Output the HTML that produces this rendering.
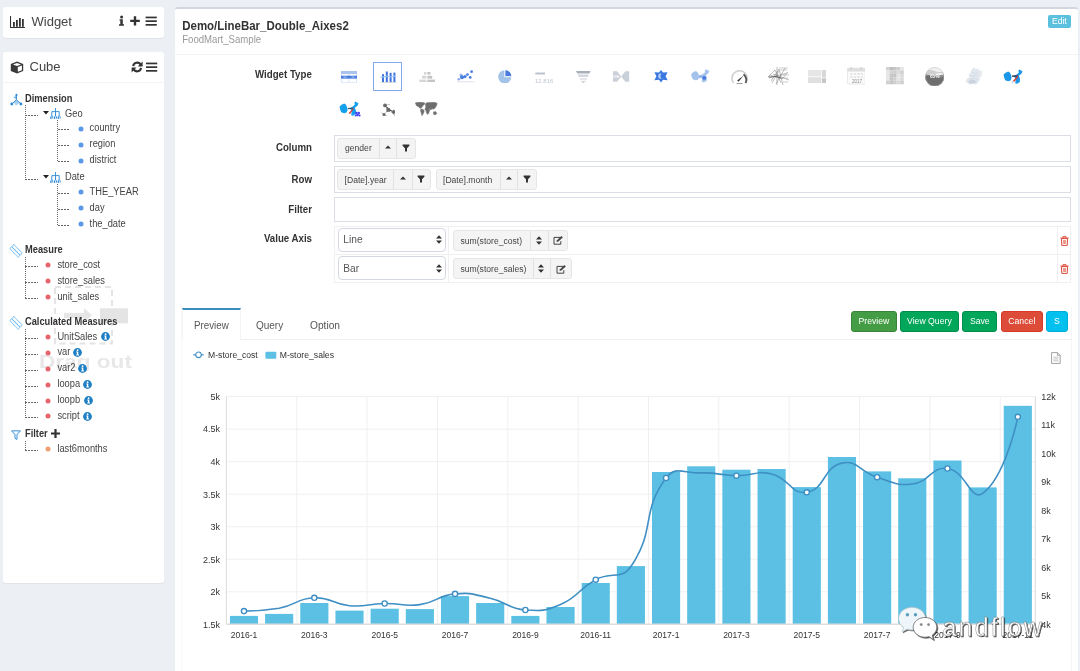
<!DOCTYPE html>
<html><head><meta charset="utf-8">
<style>
*{box-sizing:border-box}
html,body{margin:0;padding:0}
body{-webkit-font-smoothing:antialiased;will-change:transform;width:1080px;height:671px;background:#ecf0f5;position:relative;overflow:hidden;font-family:"Liberation Sans",sans-serif;color:#333}
.a{position:absolute}
.box{position:absolute;background:#fff;border-radius:3px;box-shadow:0 1px 1px rgba(0,0,0,0.06)}
.t{position:absolute;white-space:nowrap;line-height:1}
.tree{font-size:10px;color:#444}
.dl{position:absolute;width:1px;background:repeating-linear-gradient(to bottom,#666 0,#666 1px,transparent 1px,transparent 2px)}
.dh{position:absolute;height:1px;background:repeating-linear-gradient(to right,#666 0,#666 2px,transparent 2px,transparent 3px)}
.dot{position:absolute;width:4.6px;height:4.6px;border-radius:50%}
.blue{background:#5d9ae6;box-shadow:0 0 0.6px 0.4px #9cc0f0}
.red{background:#e86a72;box-shadow:0 0 0.6px 0.4px #f0a8a8}
.org{background:#f0a070}
.info{position:absolute;width:8px;height:8px;border-radius:50%;background:#1b7fc4;color:#fff;font-size:7px;font-weight:bold;text-align:center;line-height:8px;font-family:"Liberation Serif",serif}
.lbl{position:absolute;font-weight:bold;font-size:10px;color:#333;text-align:right;white-space:nowrap;line-height:1}
.fbox{position:absolute;border:1px solid #d2d6de;background:#fff}
.pill{position:absolute;background:#f4f4f4;border:1px solid #e3e3e3;border-radius:3px;height:21px;font-size:9px;color:#444}
.pill span{position:absolute;top:0;height:19px;line-height:19px;white-space:nowrap}
.pill .sep{position:absolute;top:0;width:1px;height:19px;background:#e0e0e0}
.btn{position:absolute;color:#fff;font-size:10px;text-align:center;border-radius:3px;line-height:21px;height:21.5px}
</style></head><body>
<!-- Widget box -->
<div class="box" style="left:3px;top:7px;width:161px;height:31px"></div>
<svg class="a" style="left:10px;top:16px" width="16" height="12" viewBox="0 0 16 12">
 <path d="M0.5 0 V11.5 H15" fill="none" stroke="#333" stroke-width="1.1"/>
 <rect x="3" y="6" width="1.8" height="4.8" fill="#333"/>
 <rect x="6" y="4" width="1.8" height="6.8" fill="#333"/>
 <rect x="9" y="2" width="1.8" height="8.8" fill="#333"/>
 <rect x="12" y="3" width="1.8" height="7.8" fill="#333"/>
</svg>
<div class="t" style="left:31.5px;top:15px;font-size:13px;color:#444">Widget</div>
<svg class="a" style="left:118px;top:15px" width="42" height="12" viewBox="0 0 42 12">
 <g fill="#333">
 <circle cx="3.6" cy="2" r="1.5"/>
 <path d="M1.5 4.2 H4.8 V9.3 H6 V10.8 H1 V9.3 H2.3 V5.6 H1.5Z"/>
 <path d="M12.2 4.7 H15.8 V1.2 H18.2 V4.7 H21.8 V7.1 H18.2 V10.6 H15.8 V7.1 H12.2Z"/>
 <rect x="27.6" y="1.6" width="11.2" height="1.7"/>
 <rect x="27.6" y="5.3" width="11.2" height="1.7"/>
 <rect x="27.6" y="9" width="11.2" height="1.7"/>
 </g>
</svg>
<!-- Cube box -->
<div class="box" style="left:3px;top:52px;width:161px;height:531px"></div>
<div class="a" style="left:3px;top:82px;width:161px;height:1px;background:#f4f4f4"></div>
<svg class="a" style="left:9.5px;top:60.5px" width="14" height="13" viewBox="0 0 14 13">
 <path d="M7 0.6 L13.2 2.9 V9.9 L7 12.4 L0.8 9.9 V2.9Z" fill="#3a3a3a"/>
 <path d="M7 2 L11 3.4 L7 4.9 L3 3.4Z" fill="#fff"/>
 <path d="M7.8 6 L11.9 4.5 V9.2 L7.8 10.8Z" fill="#fff"/>
</svg>
<div class="t" style="left:29.5px;top:60px;font-size:13px;color:#444">Cube</div>
<svg class="a" style="left:131px;top:60.5px" width="28" height="12" viewBox="0 0 28 12">
 <g fill="none" stroke="#333" stroke-width="2.1">
  <path d="M2.2 5.2 A4 4 0 0 1 9.6 3.6"/>
  <path d="M10 6.8 A4 4 0 0 1 2.6 8.4"/>
 </g>
 <g fill="#333">
  <path d="M11.6 0.6 V5.6 H6.8Z"/>
  <path d="M0.6 11.4 V6.4 H5.4Z"/>
  <rect x="15" y="1.6" width="11.2" height="1.7"/>
  <rect x="15" y="5.3" width="11.2" height="1.7"/>
  <rect x="15" y="9" width="11.2" height="1.7"/>
 </g>
</svg>
<svg class="a" style="left:0;top:0" width="170" height="400"><g fill="none" stroke="#e4e4e4" stroke-width="2" stroke-dasharray="6 4"><rect x="55" y="287" width="57" height="56.5"/></g><path d="M64 313H84V308L92 315.2L84 322.5V318H64Z" fill="#e6e6e6"/><rect x="100" y="308.3" width="28" height="15" fill="#e4e4e4"/><text transform="translate(39 367.9) scale(1.19 1)" font-family="Liberation Sans, sans-serif" font-weight="bold" font-size="19" fill="#e8e8e8">Drag out</text></svg>
<svg class="a" style="left:6px;top:90px" width="24" height="20" viewBox="0 0 24 20"><path d="M10.4 9.8 L13.6 12.6 L10.4 15.4 L7.2 12.6Z" fill="#a9d3f3"/><path d="M10.4 9.6 L7.4 7 L10.4 6Z" fill="#6fb6ee"/><path d="M10.4 4.6V9.8 M10.4 9.8 L6 13.8 M10.4 9.8 L14.8 13.8" fill="none" stroke="#2f7fc8" stroke-width="0.9"/><path d="M10.4 3.6 L12 5.6 H8.8Z" fill="#2f86d0"/><circle cx="5.8" cy="14" r="1.4" fill="#2a88d8"/><circle cx="14.9" cy="14" r="1.4" fill="#2a88d8"/></svg>
<div class="dl" style="left:24.5px;top:105px;height:74.5px"></div>
<div class="dh" style="left:25px;top:115px;width:13px"></div>
<div class="dh" style="left:25px;top:179px;width:13px"></div>
<svg class="a" style="left:43px;top:111.4px" width="6" height="4" viewBox="0 0 6 4"><path d="M0 0H6L3 3.6Z" fill="#222"/></svg>
<svg class="a" style="left:50px;top:107.9px" width="11" height="11" viewBox="0 0 11 11"><g fill="none" stroke="#2a8ad8" stroke-width="0.9"><path d="M5.5 0 V3.6 M1.8 8 V3.6 H9.2 V8 M5.5 3.6 V8"/><path d="M0.8 10.6 V8.6 Q1.8 7.4 2.8 8.6 V10.6 M4.5 10.6 V8.6 Q5.5 7.4 6.5 8.6 V10.6 M8.2 10.6 V8.6 Q9.2 7.4 10.2 8.6 V10.6"/></g><g fill="#2a8ad8"><rect x="0.4" y="9.4" width="1.2" height="1.4"/><rect x="4.1" y="9.4" width="1.2" height="1.4"/><rect x="7.8" y="9.4" width="1.2" height="1.4"/></g></svg>
<svg class="a" style="left:43px;top:175.4px" width="6" height="4" viewBox="0 0 6 4"><path d="M0 0H6L3 3.6Z" fill="#222"/></svg>
<svg class="a" style="left:50px;top:171.9px" width="11" height="11" viewBox="0 0 11 11"><g fill="none" stroke="#2a8ad8" stroke-width="0.9"><path d="M5.5 0 V3.6 M1.8 8 V3.6 H9.2 V8 M5.5 3.6 V8"/><path d="M0.8 10.6 V8.6 Q1.8 7.4 2.8 8.6 V10.6 M4.5 10.6 V8.6 Q5.5 7.4 6.5 8.6 V10.6 M8.2 10.6 V8.6 Q9.2 7.4 10.2 8.6 V10.6"/></g><g fill="#2a8ad8"><rect x="0.4" y="9.4" width="1.2" height="1.4"/><rect x="4.1" y="9.4" width="1.2" height="1.4"/><rect x="7.8" y="9.4" width="1.2" height="1.4"/></g></svg>
<div class="dl" style="left:57px;top:120px;height:41.5px"></div>
<div class="dh" style="left:57.5px;top:129.3px;width:12.5px"></div>
<svg class="a" style="left:77.00px;top:124.80px" width="8" height="8"><circle cx="4" cy="4" r="2.5" fill="#5b98e6"/></svg>
<div class="dh" style="left:57.5px;top:145.2px;width:12.5px"></div>
<svg class="a" style="left:77.00px;top:140.70px" width="8" height="8"><circle cx="4" cy="4" r="2.5" fill="#5b98e6"/></svg>
<div class="dh" style="left:57.5px;top:161.1px;width:12.5px"></div>
<svg class="a" style="left:77.00px;top:156.60px" width="8" height="8"><circle cx="4" cy="4" r="2.5" fill="#5b98e6"/></svg>
<div class="dl" style="left:57px;top:184px;height:40.5px"></div>
<div class="dh" style="left:57.5px;top:192.8px;width:12.5px"></div>
<svg class="a" style="left:77.00px;top:188.30px" width="8" height="8"><circle cx="4" cy="4" r="2.5" fill="#5b98e6"/></svg>
<div class="dh" style="left:57.5px;top:208.7px;width:12.5px"></div>
<svg class="a" style="left:77.00px;top:204.20px" width="8" height="8"><circle cx="4" cy="4" r="2.5" fill="#5b98e6"/></svg>
<div class="dh" style="left:57.5px;top:224.5px;width:12.5px"></div>
<svg class="a" style="left:77.00px;top:220.00px" width="8" height="8"><circle cx="4" cy="4" r="2.5" fill="#5b98e6"/></svg>
<svg class="a" style="left:6px;top:240.0px" width="24" height="20" viewBox="0 0 24 20"><g transform="translate(10 10.9) rotate(45)"><rect x="-6" y="-3" width="12" height="6" fill="#eaf5fd" stroke="#3aa4f0" stroke-width="0.9" stroke-dasharray="1 0.6"/><path d="M-6 0 H6" stroke="#3aa4f0" stroke-width="0.8"/><g fill="#fff"><rect x="-4.4" y="-2" width="2.2" height="1.6"/><rect x="-1.1" y="-2" width="2.2" height="1.6"/><rect x="2.2" y="-2" width="2.2" height="1.6"/></g></g></svg>
<div class="dl" style="left:24.5px;top:257px;height:41px"></div>
<div class="dh" style="left:25px;top:266.3px;width:13px"></div>
<svg class="a" style="left:44.40px;top:261.30px" width="8" height="8"><circle cx="4" cy="4" r="2.5" fill="#e7646c"/></svg>
<div class="dh" style="left:25px;top:282.2px;width:13px"></div>
<svg class="a" style="left:44.40px;top:277.20px" width="8" height="8"><circle cx="4" cy="4" r="2.5" fill="#e7646c"/></svg>
<div class="dh" style="left:25px;top:298.1px;width:13px"></div>
<svg class="a" style="left:44.40px;top:293.10px" width="8" height="8"><circle cx="4" cy="4" r="2.5" fill="#e7646c"/></svg>
<svg class="a" style="left:6px;top:312.3px" width="24" height="20" viewBox="0 0 24 20"><g transform="translate(10 10.9) rotate(45)"><rect x="-6" y="-3" width="12" height="6" fill="#eaf5fd" stroke="#3aa4f0" stroke-width="0.9" stroke-dasharray="1 0.6"/><path d="M-6 0 H6" stroke="#3aa4f0" stroke-width="0.8"/><g fill="#fff"><rect x="-4.4" y="-2" width="2.2" height="1.6"/><rect x="-1.1" y="-2" width="2.2" height="1.6"/><rect x="2.2" y="-2" width="2.2" height="1.6"/></g></g></svg>
<div class="dl" style="left:24.5px;top:329px;height:88px"></div>
<div class="dh" style="left:25px;top:337.9px;width:13px"></div>
<svg class="a" style="left:44.40px;top:332.90px" width="8" height="8"><circle cx="4" cy="4" r="2.5" fill="#e7646c"/></svg>
<svg class="a" style="left:100.5px;top:332.2px" width="9" height="9" viewBox="0 0 9 9"><circle cx="4.5" cy="4.5" r="4.4" fill="#1f7fc4"/><circle cx="4.6" cy="2.2" r="0.9" fill="#fff"/><path d="M3.3 3.6H5.3V6.6H6V7.5H3.2V6.6H3.9V4.4H3.3Z" fill="#fff"/></svg>
<div class="dh" style="left:25px;top:353.8px;width:13px"></div>
<svg class="a" style="left:44.40px;top:348.80px" width="8" height="8"><circle cx="4" cy="4" r="2.5" fill="#e7646c"/></svg>
<svg class="a" style="left:72.8px;top:348.1px" width="9" height="9" viewBox="0 0 9 9"><circle cx="4.5" cy="4.5" r="4.4" fill="#1f7fc4"/><circle cx="4.6" cy="2.2" r="0.9" fill="#fff"/><path d="M3.3 3.6H5.3V6.6H6V7.5H3.2V6.6H3.9V4.4H3.3Z" fill="#fff"/></svg>
<div class="dh" style="left:25px;top:369.7px;width:13px"></div>
<svg class="a" style="left:44.40px;top:364.70px" width="8" height="8"><circle cx="4" cy="4" r="2.5" fill="#e7646c"/></svg>
<svg class="a" style="left:78.0px;top:364.0px" width="9" height="9" viewBox="0 0 9 9"><circle cx="4.5" cy="4.5" r="4.4" fill="#1f7fc4"/><circle cx="4.6" cy="2.2" r="0.9" fill="#fff"/><path d="M3.3 3.6H5.3V6.6H6V7.5H3.2V6.6H3.9V4.4H3.3Z" fill="#fff"/></svg>
<div class="dh" style="left:25px;top:385.6px;width:13px"></div>
<svg class="a" style="left:44.40px;top:380.60px" width="8" height="8"><circle cx="4" cy="4" r="2.5" fill="#e7646c"/></svg>
<svg class="a" style="left:83.0px;top:379.9px" width="9" height="9" viewBox="0 0 9 9"><circle cx="4.5" cy="4.5" r="4.4" fill="#1f7fc4"/><circle cx="4.6" cy="2.2" r="0.9" fill="#fff"/><path d="M3.3 3.6H5.3V6.6H6V7.5H3.2V6.6H3.9V4.4H3.3Z" fill="#fff"/></svg>
<div class="dh" style="left:25px;top:401.5px;width:13px"></div>
<svg class="a" style="left:44.40px;top:396.50px" width="8" height="8"><circle cx="4" cy="4" r="2.5" fill="#e7646c"/></svg>
<svg class="a" style="left:83.5px;top:395.8px" width="9" height="9" viewBox="0 0 9 9"><circle cx="4.5" cy="4.5" r="4.4" fill="#1f7fc4"/><circle cx="4.6" cy="2.2" r="0.9" fill="#fff"/><path d="M3.3 3.6H5.3V6.6H6V7.5H3.2V6.6H3.9V4.4H3.3Z" fill="#fff"/></svg>
<div class="dh" style="left:25px;top:417.4px;width:13px"></div>
<svg class="a" style="left:44.40px;top:412.40px" width="8" height="8"><circle cx="4" cy="4" r="2.5" fill="#e7646c"/></svg>
<svg class="a" style="left:83.0px;top:411.7px" width="9" height="9" viewBox="0 0 9 9"><circle cx="4.5" cy="4.5" r="4.4" fill="#1f7fc4"/><circle cx="4.6" cy="2.2" r="0.9" fill="#fff"/><path d="M3.3 3.6H5.3V6.6H6V7.5H3.2V6.6H3.9V4.4H3.3Z" fill="#fff"/></svg>
<svg class="a" style="left:11px;top:430px" width="10" height="10" viewBox="0 0 10 10"><path d="M0.6 0.8H9.4L6 4.8V9.4L4 8.4V4.8Z" fill="#eef6fd" stroke="#2a8ad8" stroke-width="0.9"/></svg>
<svg class="a" style="left:50.5px;top:429px" width="9" height="9" viewBox="0 0 9 9"><path d="M0 3.4H3.4V0H5.6V3.4H9V5.6H5.6V9H3.4V5.6H0Z" fill="#333"/></svg>
<div class="dl" style="left:24.5px;top:441px;height:9.5px"></div>
<div class="dh" style="left:25px;top:450.2px;width:13px"></div>
<svg class="a" style="left:44.40px;top:445.10px" width="8" height="8"><circle cx="4" cy="4" r="2.5" fill="#f0a070"/></svg>
<svg class="a" style="left:0;top:0" width="1080" height="671"><g font-family="Liberation Sans, sans-serif"><text transform="translate(25.00 102.00) scale(0.9259 1)" font-size="10.04" fill="#333" font-weight="bold">Dimension</text><text transform="translate(65.00 116.50) scale(0.9259 1)" font-size="10.04" fill="#444">Geo</text><text transform="translate(65.00 180.30) scale(0.9259 1)" font-size="10.04" fill="#444">Date</text><text transform="translate(89.60 131.30) scale(0.9259 1)" font-size="10.04" fill="#444">country</text><text transform="translate(89.60 147.20) scale(0.9259 1)" font-size="10.04" fill="#444">region</text><text transform="translate(89.60 163.10) scale(0.9259 1)" font-size="10.04" fill="#444">district</text><text transform="translate(89.60 194.80) scale(0.9259 1)" font-size="10.04" fill="#444">THE_YEAR</text><text transform="translate(89.60 210.70) scale(0.9259 1)" font-size="10.04" fill="#444">day</text><text transform="translate(89.60 226.50) scale(0.9259 1)" font-size="10.04" fill="#444">the_date</text><text transform="translate(25.00 253.40) scale(0.9259 1)" font-size="10.04" fill="#333" font-weight="bold">Measure</text><text transform="translate(57.40 267.90) scale(0.9259 1)" font-size="10.04" fill="#444">store_cost</text><text transform="translate(57.40 283.80) scale(0.9259 1)" font-size="10.04" fill="#444">store_sales</text><text transform="translate(57.40 299.70) scale(0.9259 1)" font-size="10.04" fill="#444">unit_sales</text><text transform="translate(25.00 325.00) scale(0.9259 1)" font-size="10.04" fill="#333" font-weight="bold">Calculated Measures</text><text transform="translate(57.40 339.50) scale(0.9259 1)" font-size="10.04" fill="#444">UnitSales</text><text transform="translate(57.40 355.40) scale(0.9259 1)" font-size="10.04" fill="#444">var</text><text transform="translate(57.40 371.30) scale(0.9259 1)" font-size="10.04" fill="#444">var2</text><text transform="translate(57.40 387.20) scale(0.9259 1)" font-size="10.04" fill="#444">loopa</text><text transform="translate(57.40 403.10) scale(0.9259 1)" font-size="10.04" fill="#444">loopb</text><text transform="translate(57.40 419.00) scale(0.9259 1)" font-size="10.04" fill="#444">script</text><text transform="translate(25.00 437.10) scale(0.9259 1)" font-size="10.04" fill="#333" font-weight="bold">Filter</text><text transform="translate(57.40 452.00) scale(0.9259 1)" font-size="10.04" fill="#444">last6months</text></g></svg><div class="a" style="left:175px;top:7px;width:903px;height:680px;background:#fff;border-top:2px solid #d2d6de;border-radius:3px 3px 0 0"></div>
<div class="a" style="left:1048px;top:15px;width:22.7px;height:12.6px;background:#5bc0de;border-radius:2px;color:#fff;font-size:8.6px;line-height:12.6px;text-align:center">Edit</div>
<div class="a" style="left:175px;top:54px;width:903px;height:1px;background:#f4f4f4"></div>
<div class="a" style="left:373.3px;top:62.2px;width:28.7px;height:28.6px;border:1.4px solid #85a8f2"></div>
<svg class="a" style="left:0;top:0" width="1080" height="671"><g font-family="Liberation Sans, sans-serif"><text transform="translate(182.20 30.00) scale(0.9259 1)" font-size="12.42" fill="#333" font-weight="bold">Demo/LineBar_Double_Aixes2</text><text transform="translate(182.20 43.00) scale(0.9259 1)" font-size="10.37" fill="#999">FoodMart_Sample</text><text transform="translate(311.80 77.80) scale(0.9259 1)" font-size="10.48" fill="#333" font-weight="bold" text-anchor="end">Widget Type</text><text transform="translate(312.00 151.40) scale(0.9259 1)" font-size="10.48" fill="#333" font-weight="bold" text-anchor="end">Column</text><text transform="translate(312.00 182.50) scale(0.9259 1)" font-size="10.48" fill="#333" font-weight="bold" text-anchor="end">Row</text><text transform="translate(312.00 212.60) scale(0.9259 1)" font-size="10.48" fill="#333" font-weight="bold" text-anchor="end">Filter</text><text transform="translate(312.00 242.20) scale(0.9259 1)" font-size="10.48" fill="#333" font-weight="bold" text-anchor="end">Value Axis</text></g></svg><svg class="a" style="left:340.5px;top:70.8px" width="16" height="12.2" viewBox="0 0 16 12.2"><rect x="0" y="0" width="16" height="12.2" fill="#dce8f8"/><rect x="0" y="0" width="16" height="3" fill="#a9c3ec"/><rect x="0" y="4.6" width="16" height="3" fill="#4a7fe0"/><g fill="#fff"><rect x="1" y="3.2" width="6.4" height="1.2"/><rect x="8.6" y="3.2" width="6.4" height="1.2"/><rect x="1" y="8" width="6.4" height="3.2"/><rect x="8.6" y="8" width="6.4" height="3.2"/></g><g fill="#c8d8f4"><rect x="2.5" y="5.7" width="3" height="0.8"/><rect x="10.5" y="5.7" width="3" height="0.8"/></g></svg>
<svg class="a" style="left:380px;top:70.5px" width="17" height="12.5" viewBox="0 0 17 12.5"><g fill="#3f73e0"><rect x="2" y="3.2" width="2" height="8"/><rect x="5.8" y="0.5" width="2" height="10.7"/><rect x="9.6" y="1.8" width="2" height="9.4"/><rect x="13.4" y="1.6" width="2" height="9.6"/></g><path d="M0.5 6.4 L4 5.8 L7 5 L11 6 L16 4.8" fill="none" stroke="#9cc8f0" stroke-width="1.2"/><rect x="0.5" y="11.4" width="16" height="0.6" fill="#ccc"/></svg>
<svg class="a" style="left:418.5px;top:71.5px" width="17" height="10.5" viewBox="0 0 17 10.5"><g fill="#d6d6d6"><rect x="5" y="0" width="2.4" height="2.6"/><rect x="3" y="3.8" width="4.4" height="2.8"/><rect x="0.4" y="7.6" width="7" height="2.8"/></g><g fill="#c4c4c4"><rect x="8.4" y="0" width="3" height="2.6"/><rect x="8.4" y="3.8" width="4.8" height="2.8"/><rect x="8.4" y="7.6" width="7.6" height="2.8"/></g></svg>
<svg class="a" style="left:456.8px;top:70px" width="18" height="12.6" viewBox="0 0 18 12.6"><g fill="#4a7fe0"><circle cx="4" cy="5" r="1.6" fill="#9bb8ee"/><circle cx="5" cy="7.2" r="2"/><circle cx="8" cy="6.6" r="1.6"/><circle cx="10.4" cy="4.6" r="1.4"/><circle cx="14.6" cy="1.7" r="1.4"/><circle cx="13.2" cy="7.4" r="1.4"/><circle cx="1.8" cy="9.2" r="1.3" fill="#8aaaf0"/></g><rect x="0" y="11.6" width="17.6" height="0.6" fill="#ccd"/></svg>
<svg class="a" style="left:498.2px;top:69.9px" width="13.5" height="13.5" viewBox="0 0 13.5 13.5"><circle cx="6.75" cy="6.75" r="6.6" fill="#a3c3e9"/><path d="M7.4 0.2 A6.5 6.5 0 0 1 13.3 6.1 H7.4Z" fill="#4a7ae0"/><path d="M6.75 0 V6.75 H13.5" fill="none" stroke="#fff" stroke-width="0.9"/></svg>
<svg class="a" style="left:535px;top:71.5px" width="18" height="11" viewBox="0 0 18 11"><rect x="0.3" y="0.5" width="9.7" height="2" fill="#bcc3cf"/><text x="0" y="10.5" font-family="Liberation Sans,sans-serif" font-size="6" fill="#c0c6d0">12,816</text></svg>
<svg class="a" style="left:575.6px;top:70.8px" width="15" height="12.2" viewBox="0 0 15 12.2"><path d="M0 0H14.6L13.4 2.6H1.2Z" fill="#a9b0bb"/><path d="M1.6 3.6H13L11.9 6H2.7Z" fill="#d4d8de"/><path d="M3.2 7H11.4L10.3 9.2H4.3Z" fill="#e4e6ea"/><path d="M4.8 10.2H9.8L7.3 12.2Z" fill="#c6ccd4"/></svg>
<svg class="a" style="left:613.4px;top:71.2px" width="16.4" height="11" viewBox="0 0 16.4 11"><path d="M0 0.3H4L8.2 5.5L12.4 0.3H16.2V10.7H12.4L8.2 5.5L4 10.7H0V7H4.4L6.5 5.5L4.4 4H0Z" fill="#c9d0d8"/><rect x="0" y="4" width="4.4" height="3" fill="#dfe3e8"/></svg>
<svg class="a" style="left:653.8px;top:70.4px" width="14" height="12.4" viewBox="0 0 14 12.4"><path d="M7 0 L9 2.4 L13.6 2.2 L11.6 6.2 L13.6 10.2 L9 9.8 L7 12.4 L5 9.8 L0.4 10.2 L2.4 6.2 L0.4 2.2 L5 2.4Z" fill="#3a78e0"/><path d="M7.6 3.6 L5 3.8 L4 6.2 L5 8.6 L7.6 8.8 L6.2 6.2Z" fill="#b8d0f6"/></svg>
<svg class="a" style="left:0px;top:0px" width="1080" height="100" viewBox="0 0 1080 100"><g transform="translate(688.18 66.57) scale(0.92 0.87)"><path d="M3.5 8.8 L5.5 6.8 L8.2 5.6 L9.8 6.6 L11.2 9.2 L11.6 12 L10.6 14.6 L8.2 15.3 L5.2 14.2 L4.2 11.8Z M13.8 10.2 L16.8 8.4 L18.8 6.6 L18.4 4.6 L19.4 3.6 L21 4.4 L22.6 5.4 L21.4 7.8 L18.8 9.8 L20 12.6 L19.8 16 L17.2 17.8 L15.2 17.2 L15.8 12.8 L14.6 11.4Z" fill="#a3c1ea" stroke="#a3c1ea" stroke-width="0.8" stroke-linejoin="round"/><path d="M11.6 10.4 L14.6 10.4 L15.4 12.8 L12 13.6Z" fill="#a3c1ea"/><circle cx="17.4" cy="13" r="2.2" fill="#4a7ae0"/><circle cx="13.4" cy="11" r="1.1" fill="#7a9fe6"/></g></svg>
<svg class="a" style="left:731.3px;top:69.5px" width="17.2" height="15" viewBox="0 0 17.2 15"><path d="M2.6 13 A7.6 7.6 0 1 1 14.6 13" fill="none" stroke="#cfcfcf" stroke-width="1.6"/><path d="M12.6 4.2 A7.6 7.6 0 0 1 14.6 13" fill="none" stroke="#555" stroke-width="1.8"/><path d="M6.2 10.6 L12.6 5.4 L7.6 11.8Z" fill="#333"/><rect x="5.6" y="13" width="6" height="1" fill="#999"/></svg>
<svg class="a" style="left:766.5px;top:66px" width="23" height="20" viewBox="0 0 23 20"><g fill="none" stroke="#777" stroke-width="0.5"><path d="M1 11 L8 4 L14 17 M2 12 L20 7 M4 15 L12 3 L16 19 M6 8 L22 14 M9 18 L18 2 M3 9 L15 13 L21 6 M10 1 V19 M12 5 L5 17"/><path d="M12 2H21 M13 4H20 M14 9 H22 M15 12H21 M16 16H21" stroke="#999"/></g><path d="M1.5 11 L9 10.5 L14 12" stroke="#555" stroke-width="0.8" fill="none"/></svg>
<svg class="a" style="left:807.8px;top:69.5px" width="18.5" height="13.5" viewBox="0 0 18.5 13.5"><rect x="0" y="0" width="13" height="6.4" fill="#e6e6e6"/><rect x="0" y="7.2" width="13" height="6.3" fill="#e0e0e0"/><rect x="13.8" y="0" width="4.7" height="7.4" fill="#d8d8d8"/><rect x="13.8" y="8.2" width="4.7" height="5.3" fill="#c8c8c8"/></svg>
<svg class="a" style="left:846.8px;top:67.4px" width="18.6" height="17.4" viewBox="0 0 18.6 17.4"><rect x="0.4" y="1.2" width="17.8" height="15.8" rx="1" fill="#fafafa" stroke="#e2e2e2" stroke-width="0.8"/><rect x="0.4" y="1.2" width="17.8" height="3.4" fill="#dedede"/><g fill="#e8e8e8"><rect x="3" y="6" width="2.6" height="2"/><rect x="6.6" y="6" width="2.6" height="2"/><rect x="10.2" y="6" width="2.6" height="2"/><rect x="13.8" y="6" width="2.2" height="2"/><rect x="3" y="9" width="2.6" height="2"/><rect x="6.6" y="9" width="2.6" height="2"/><rect x="10.2" y="9" width="2.6" height="2"/><rect x="13.8" y="9" width="2.2" height="2"/></g><text x="5" y="15.6" font-family="Liberation Sans,sans-serif" font-size="4.5" fill="#888">2017</text><g fill="#ccc"><rect x="3.6" y="0" width="1.2" height="2.4"/><rect x="13.6" y="0" width="1.2" height="2.4"/></g></svg>
<svg class="a" style="left:886.4px;top:67.4px" width="17.8" height="17.2" viewBox="0 0 17.8 17.2"><g><rect x="0.00" y="0.00" width="3.6" height="3.5" fill="#d2d2d2"/><rect x="3.56" y="0.00" width="3.6" height="3.5" fill="#bdbdbd"/><rect x="7.12" y="0.00" width="3.6" height="3.5" fill="#c6c6c6"/><rect x="10.68" y="0.00" width="3.6" height="3.5" fill="#cfcfcf"/><rect x="14.24" y="0.00" width="3.6" height="3.5" fill="#e6e6e6"/><rect x="0.00" y="3.44" width="3.6" height="3.5" fill="#e6e6e6"/><rect x="3.56" y="3.44" width="3.6" height="3.5" fill="#d2d2d2"/><rect x="7.12" y="3.44" width="3.6" height="3.5" fill="#cfcfcf"/><rect x="10.68" y="3.44" width="3.6" height="3.5" fill="#dadada"/><rect x="14.24" y="3.44" width="3.6" height="3.5" fill="#cfcfcf"/><rect x="0.00" y="6.88" width="3.6" height="3.5" fill="#e6e6e6"/><rect x="3.56" y="6.88" width="3.6" height="3.5" fill="#c6c6c6"/><rect x="7.12" y="6.88" width="3.6" height="3.5" fill="#c6c6c6"/><rect x="10.68" y="6.88" width="3.6" height="3.5" fill="#e6e6e6"/><rect x="14.24" y="6.88" width="3.6" height="3.5" fill="#dadada"/><rect x="0.00" y="10.32" width="3.6" height="3.5" fill="#e6e6e6"/><rect x="3.56" y="10.32" width="3.6" height="3.5" fill="#c6c6c6"/><rect x="7.12" y="10.32" width="3.6" height="3.5" fill="#cfcfcf"/><rect x="10.68" y="10.32" width="3.6" height="3.5" fill="#e6e6e6"/><rect x="14.24" y="10.32" width="3.6" height="3.5" fill="#dadada"/><rect x="0.00" y="13.76" width="3.6" height="3.5" fill="#cfcfcf"/><rect x="3.56" y="13.76" width="3.6" height="3.5" fill="#c6c6c6"/><rect x="7.12" y="13.76" width="3.6" height="3.5" fill="#cfcfcf"/><rect x="10.68" y="13.76" width="3.6" height="3.5" fill="#dadada"/><rect x="14.24" y="13.76" width="3.6" height="3.5" fill="#cfcfcf"/></g></svg>
<svg class="a" style="left:924.6px;top:66.8px" width="19.4" height="19.4" viewBox="0 0 19.4 19.4"><defs><clipPath id="lc"><circle cx="9.7" cy="9.7" r="9.5"/></clipPath></defs><circle cx="9.7" cy="9.7" r="9.5" fill="#f0f0f0"/><g clip-path="url(#lc)"><path d="M0 7 Q5 4.5 9.7 7 T19.4 7 V19.4 H0Z" fill="#8c8c8c"/><path d="M0 9.5 Q5 7.5 9.7 9.5 T19.4 9.5 V19.4 H0Z" fill="#6e6e6e"/><path d="M0 4 Q5 2 9.7 4 T19.4 4 V7 Q15 5 9.7 7 T0 7Z" fill="#cfcfcf"/></g><circle cx="9.7" cy="9.7" r="9.3" fill="none" stroke="#bdbdbd" stroke-width="0.5"/><text x="9.7" y="11.4" text-anchor="middle" font-family="Liberation Sans,sans-serif" font-weight="bold" font-size="4.8" fill="#fff">65%</text></svg>
<svg class="a" style="left:964.6px;top:66.8px" width="18.4" height="18" viewBox="0 0 18.4 18"><path d="M9 0.5 L11 2 L13 1.4 L14.6 3.6 L17.8 4.4 L16.4 7 L17 9 L14.4 10.4 L15 12.6 L13.4 15 L11 17.4 L8 17 L5 17.6 L2.2 16 L0.4 14.2 L2 11.6 L4.6 10.6 L3.6 8 L5.6 5.6 L6.6 2.6Z" fill="#e2e8ee"/><path d="M4 13 L9 11 L13 13 M7 5 L11 7 L13 5 M5 9 H12" fill="none" stroke="#c6d2de" stroke-width="0.6"/><path d="M3 14 L8 12.6 L12 14.4 L9 16.4 L4.4 16.6Z" fill="#c9d4e0"/></svg>
<svg class="a" style="left:1000px;top:66px" width="26" height="21" viewBox="0 0 26 21"><path d="M3.5 8.8 L5.5 6.8 L8.2 5.6 L9.8 6.6 L11.2 9.2 L11.6 12 L10.6 14.6 L8.2 15.3 L5.2 14.2 L4.2 11.8Z M13.8 10.2 L16.8 8.4 L18.8 6.6 L18.4 4.6 L19.4 3.6 L21 4.4 L22.6 5.4 L21.4 7.8 L18.8 9.8 L20 12.6 L19.8 16 L17.2 17.8 L15.2 17.2 L15.8 12.8 L14.6 11.4Z" fill="#1a96e8"/><path d="M12 10.2 L17.6 9.8" stroke="#223" stroke-width="1.2"/><path d="M17.8 9.6 L18.4 10.4 L14.4 15.8 L12.8 15 Z" fill="#e03a30"/><circle cx="12.6" cy="16" r="0.9" fill="#9fd0f4"/></svg>
<svg class="a" style="left:336px;top:98px" width="26" height="21" viewBox="0 0 26 21"><path d="M3.5 8.8 L5.5 6.8 L8.2 5.6 L9.8 6.6 L11.2 9.2 L11.6 12 L10.6 14.6 L8.2 15.3 L5.2 14.2 L4.2 11.8Z M13.8 10.2 L16.8 8.4 L18.8 6.6 L18.4 4.6 L19.4 3.6 L21 4.4 L22.6 5.4 L21.4 7.8 L18.8 9.8 L20 12.6 L19.8 16 L17.2 17.8 L15.2 17.2 L15.8 12.8 L14.6 11.4Z" fill="#13a0ec"/><path d="M12 10.6 L17 10.2" stroke="#456" stroke-width="1.2"/><path d="M17.2 10 L17.8 10.8 L14 16 L12.6 15.2 Z" fill="#e03a30"/><g fill="#4040f0"><circle cx="20.4" cy="15" r="1.3"/><circle cx="22.8" cy="15" r="1.2"/><circle cx="21.6" cy="17" r="1.3"/><circle cx="19.8" cy="17.6" r="1"/><circle cx="23.6" cy="17.4" r="1"/></g></svg>
<svg class="a" style="left:381px;top:102.6px" width="14.2" height="13.8" viewBox="0 0 14.2 13.8"><g stroke="#999" stroke-width="0.6"><path d="M4 2.4 L7.2 7 L12.6 9 M7.2 7 L3 11.6 M4 2.4 L9 1.4 M12.6 9 L13.8 6.8 M3 11.6 L0.4 9.6 M3 11.6 L6 13 M12.6 9 L13.8 13"/></g><g fill="#6a6a6a"><circle cx="4" cy="2.4" r="1.9"/><rect x="5.4" y="5.2" width="3.6" height="3.6"/><path d="M12.6 6.6 L15 9 L12.6 11.4 L10.2 9Z"/><circle cx="3" cy="11.6" r="1.5"/></g></svg>
<svg class="a" style="left:415.4px;top:102.4px" width="22.6" height="14.6" viewBox="0 0 22.6 14.6"><path d="M0.3 1 L3 0.3 L6.5 0.2 L9.5 0.8 L9.6 2.2 L8 3.6 L6.8 5.4 L5.2 6.4 L3.6 4.8 L1.6 3.8Z M5.8 7 L8.2 7.4 L9.2 9 L8.4 11.4 L7 13.8 L6.4 11.6 L5.6 9Z M10.6 1.4 L12.6 0.4 L16 0.6 L19.6 0.2 L22.2 1.4 L21.6 3.4 L20.4 5.6 L18.6 7.2 L17 6.6 L16 8 L14.6 6.4 L13.2 5.4 L11.2 5.4 L10.4 3.4Z M10.4 5.6 L13.6 5.6 L14.8 7.6 L14 10.4 L12.8 12.4 L11.6 11.2 L11 8.8 L10 7.4Z M18.4 10 L20.6 9.6 L21.8 11.4 L20.6 12.8 L18.8 12.4Z" fill="#6e6e6e" stroke="#6e6e6e" stroke-width="0.5" stroke-linejoin="round"/></svg><div class="a" style="left:334.2px;top:134.7px;width:736.8px;height:27.0px;border:1px solid #dbdee5"></div>
<div class="a" style="left:334.2px;top:166.1px;width:736.8px;height:26.7px;border:1px solid #dbdee5"></div>
<div class="a" style="left:334.2px;top:197.3px;width:736.8px;height:24.3px;border:1px solid #dbdee5"></div>
<div class="a" style="left:337.2px;top:137.6px;width:79.2px;height:21.3px;background:#f4f4f4;border:1px solid #e6e6e6;border-radius:3px"></div>
<div class="a" style="left:379.4px;top:138.6px;width:1px;height:19.3px;background:#e2e2e2"></div>
<div class="a" style="left:396.4px;top:138.6px;width:1px;height:19.3px;background:#e2e2e2"></div>
<div class="a" style="left:384.9px;top:143.7px;line-height:0"><svg width="6" height="4" viewBox="0 0 6 4"><path d="M0 3.6 L3 0.4 L6 3.6Z" fill="#333"/></svg></div>
<div class="a" style="left:402.4px;top:144.1px;line-height:0"><svg width="8" height="8" viewBox="0 0 8 8"><path d="M0.6 0.6H7.4V1.8L5 4.2V7.6H3V4.2L0.6 1.8Z" fill="#333"/></svg></div>
<div class="a" style="left:337.2px;top:168.9px;width:93.4px;height:21.3px;background:#f4f4f4;border:1px solid #e6e6e6;border-radius:3px"></div>
<div class="a" style="left:393.3px;top:169.9px;width:1px;height:19.3px;background:#e2e2e2"></div>
<div class="a" style="left:411.7px;top:169.9px;width:1px;height:19.3px;background:#e2e2e2"></div>
<div class="a" style="left:399.5px;top:175.0px;line-height:0"><svg width="6" height="4" viewBox="0 0 6 4"><path d="M0 3.6 L3 0.4 L6 3.6Z" fill="#333"/></svg></div>
<div class="a" style="left:417.1px;top:175.4px;line-height:0"><svg width="8" height="8" viewBox="0 0 8 8"><path d="M0.6 0.6H7.4V1.8L5 4.2V7.6H3V4.2L0.6 1.8Z" fill="#333"/></svg></div>
<div class="a" style="left:435.6px;top:168.9px;width:101.7px;height:21.3px;background:#f4f4f4;border:1px solid #e6e6e6;border-radius:3px"></div>
<div class="a" style="left:500.4px;top:169.9px;width:1px;height:19.3px;background:#e2e2e2"></div>
<div class="a" style="left:517.3px;top:169.9px;width:1px;height:19.3px;background:#e2e2e2"></div>
<div class="a" style="left:505.8px;top:175.0px;line-height:0"><svg width="6" height="4" viewBox="0 0 6 4"><path d="M0 3.6 L3 0.4 L6 3.6Z" fill="#333"/></svg></div>
<div class="a" style="left:523.3px;top:175.4px;line-height:0"><svg width="8" height="8" viewBox="0 0 8 8"><path d="M0.6 0.6H7.4V1.8L5 4.2V7.6H3V4.2L0.6 1.8Z" fill="#333"/></svg></div>
<div class="a" style="left:334.3px;top:226.3px;width:736.7px;height:56.3px;border:1px solid #f0f0f0"></div>
<div class="a" style="left:334.3px;top:254.3px;width:736.7px;height:1px;background:#f0f0f0"></div>
<div class="a" style="left:448.3px;top:226.3px;width:1px;height:56.3px;background:#f0f0f0"></div>
<div class="a" style="left:1057.4px;top:226.3px;width:1px;height:56.3px;background:#f0f0f0"></div>
<div class="a" style="left:337.6px;top:227.6px;width:108.1px;height:24.1px;border:1px solid #d4d8e4;border-radius:4px;background:#fff"></div>
<div class="a" style="left:436.3px;top:235.1px;line-height:0"><svg width="6" height="9" viewBox="0 0 6 9"><path d="M0 3.6 L3 0.3 L6 3.6Z M0 5.4 L3 8.7 L6 5.4Z" fill="#333"/></svg></div>
<div class="a" style="left:337.6px;top:256.1px;width:108.1px;height:23.9px;border:1px solid #d4d8e4;border-radius:4px;background:#fff"></div>
<div class="a" style="left:436.3px;top:263.6px;line-height:0"><svg width="6" height="9" viewBox="0 0 6 9"><path d="M0 3.6 L3 0.3 L6 3.6Z M0 5.4 L3 8.7 L6 5.4Z" fill="#333"/></svg></div>
<div class="a" style="left:453.0px;top:229.7px;width:115.4px;height:21.2px;background:#f4f4f4;border:1px solid #e6e6e6;border-radius:3px"></div>
<div class="a" style="left:529.5px;top:230.7px;width:1px;height:19.2px;background:#e2e2e2"></div>
<div class="a" style="left:547.6px;top:230.7px;width:1px;height:19.2px;background:#e2e2e2"></div>
<div class="a" style="left:535.5px;top:235.8px;line-height:0"><svg width="6" height="9" viewBox="0 0 6 9"><path d="M0 3.6 L3 0.3 L6 3.6Z M0 5.4 L3 8.7 L6 5.4Z" fill="#333"/></svg></div>
<div class="a" style="left:553.0px;top:236.1px;line-height:0"><svg width="10" height="9" viewBox="0 0 10 9"><path d="M7.6 1.4 H1 V8.2 H7.8 V5.2" fill="none" stroke="#444" stroke-width="1"/><path d="M3.6 6 L4 4.2 L8.4 0 L9.8 1.4 L5.4 5.6Z" fill="#444"/></svg></div>
<div class="a" style="left:453.0px;top:258.2px;width:118.5px;height:21.2px;background:#f4f4f4;border:1px solid #e6e6e6;border-radius:3px"></div>
<div class="a" style="left:532.6px;top:259.2px;width:1px;height:19.2px;background:#e2e2e2"></div>
<div class="a" style="left:550.2px;top:259.2px;width:1px;height:19.2px;background:#e2e2e2"></div>
<div class="a" style="left:538.4px;top:264.3px;line-height:0"><svg width="6" height="9" viewBox="0 0 6 9"><path d="M0 3.6 L3 0.3 L6 3.6Z M0 5.4 L3 8.7 L6 5.4Z" fill="#333"/></svg></div>
<div class="a" style="left:555.9px;top:264.6px;line-height:0"><svg width="10" height="9" viewBox="0 0 10 9"><path d="M7.6 1.4 H1 V8.2 H7.8 V5.2" fill="none" stroke="#444" stroke-width="1"/><path d="M3.6 6 L4 4.2 L8.4 0 L9.8 1.4 L5.4 5.6Z" fill="#444"/></svg></div>
<div class="a" style="left:1059.8px;top:236px;line-height:0"><svg width="9" height="10" viewBox="0 0 9 10"><path d="M0.4 2H8.6 M3 2V0.6H6V2" fill="none" stroke="#dd4b39" stroke-width="0.9"/><path d="M1.4 2.6 H7.6 L7.2 9.4 H1.8Z" fill="none" stroke="#dd4b39" stroke-width="1"/><path d="M3.4 4V8 M4.5 4V8 M5.6 4V8" stroke="#dd4b39" stroke-width="0.6"/></svg></div>
<div class="a" style="left:1059.8px;top:264.4px;line-height:0"><svg width="9" height="10" viewBox="0 0 9 10"><path d="M0.4 2H8.6 M3 2V0.6H6V2" fill="none" stroke="#dd4b39" stroke-width="0.9"/><path d="M1.4 2.6 H7.6 L7.2 9.4 H1.8Z" fill="none" stroke="#dd4b39" stroke-width="1"/><path d="M3.4 4V8 M4.5 4V8 M5.6 4V8" stroke="#dd4b39" stroke-width="0.6"/></svg></div>
<div class="a" style="left:181px;top:308px;width:890.5px;height:400px;border-left:1px solid #f9f9f9;border-right:1px solid #f6f6f6"></div>
<div class="a" style="left:181.5px;top:339px;width:890px;height:1px;background:#f0f0f0"></div>
<div class="a" style="left:182.2px;top:308px;width:58.6px;height:32px;background:#fff;border-top:2.4px solid #3c8dbc;border-left:1px solid #f4f4f4;border-right:1px solid #f4f4f4"></div>
<div class="a" style="left:850.8px;top:310.5px;width:46.3px;height:21.5px;background:#449d44;border:1px solid #398439;border-radius:3px;color:#fff;font-size:8.7px;line-height:18.5px;text-align:center;white-space:nowrap">Preview</div>
<div class="a" style="left:899.9px;top:310.5px;width:59.0px;height:21.5px;background:#00a65a;border:1px solid #008d4c;border-radius:3px;color:#fff;font-size:8.7px;line-height:18.5px;text-align:center;white-space:nowrap">View Query</div>
<div class="a" style="left:962.2px;top:310.5px;width:35.2px;height:21.5px;background:#00a65a;border:1px solid #008d4c;border-radius:3px;color:#fff;font-size:8.7px;line-height:18.5px;text-align:center;white-space:nowrap">Save</div>
<div class="a" style="left:1000.6px;top:310.5px;width:42.4px;height:21.5px;background:#dd4b39;border:1px solid #d73925;border-radius:3px;color:#fff;font-size:8.7px;line-height:18.5px;text-align:center;white-space:nowrap">Cancel</div>
<div class="a" style="left:1046px;top:310.5px;width:21.7px;height:21.5px;background:#00c0ef;border:1px solid #00acd6;border-radius:3px;color:#fff;font-size:8.7px;line-height:18.5px;text-align:center;white-space:nowrap">S</div>
<svg class="a" style="left:192px;top:350px" width="150" height="10"><path d="M1.3 4.8H11.7" stroke="#3f8fc4" stroke-width="1.2"/><circle cx="6.5" cy="4.8" r="2.8" fill="#fff" stroke="#3f8fc4" stroke-width="1.1"/><rect x="73.4" y="1.7" width="10.9" height="7" rx="1" fill="#5bc0e3"/></svg>
<svg class="a" style="left:1050.5px;top:352px" width="10" height="12" viewBox="0 0 10 12"><path d="M0.6 0.6H6.4L9.2 3.4V11.4H0.6Z" fill="#fff" stroke="#999" stroke-width="0.9"/><path d="M6.4 0.6V3.4H9.2" fill="none" stroke="#999" stroke-width="0.8"/><path d="M2.4 5.2H7.4M2.4 7H7.4M2.4 8.8H7.4" stroke="#aaa" stroke-width="0.7"/></svg>
<svg class="a" style="left:0;top:0" width="1080" height="671"><g font-family="Liberation Sans, sans-serif"><text transform="translate(345.00 151.45) scale(0.9259 1)" font-size="9.29" fill="#444">gender</text><text transform="translate(344.60 182.75) scale(0.9259 1)" font-size="9.29" fill="#444">[Date].year</text><text transform="translate(443.00 182.75) scale(0.9259 1)" font-size="9.29" fill="#444">[Date].month</text><text transform="translate(343.30 243.25) scale(0.9259 1)" font-size="11.02" fill="#555">Line</text><text transform="translate(343.30 271.65) scale(0.9259 1)" font-size="11.02" fill="#555">Bar</text><text transform="translate(460.50 243.50) scale(0.9259 1)" font-size="9.29" fill="#444">sum(store_cost)</text><text transform="translate(460.50 272.00) scale(0.9259 1)" font-size="9.29" fill="#444">sum(store_sales)</text><text transform="translate(193.90 328.90) scale(0.9259 1)" font-size="10.58" fill="#555">Preview</text><text transform="translate(256.00 328.90) scale(0.9259 1)" font-size="10.80" fill="#555">Query</text><text transform="translate(310.00 328.90) scale(0.9259 1)" font-size="11.02" fill="#555">Option</text><text transform="translate(208.10 358.30) scale(0.9259 1)" font-size="9.29" fill="#333">M-store_cost</text><text transform="translate(279.70 358.30) scale(0.9259 1)" font-size="9.34" fill="#333">M-store_sales</text></g></svg><svg width="1080" height="671" style="position:absolute;left:0;top:0">
<g><line x1="226.4" y1="396.60" x2="1035.4" y2="396.60" stroke="#f0f0f0" stroke-width="1"/><line x1="226.4" y1="429.13" x2="1035.4" y2="429.13" stroke="#f0f0f0" stroke-width="1"/><line x1="226.4" y1="461.66" x2="1035.4" y2="461.66" stroke="#f0f0f0" stroke-width="1"/><line x1="226.4" y1="494.19" x2="1035.4" y2="494.19" stroke="#f0f0f0" stroke-width="1"/><line x1="226.4" y1="526.71" x2="1035.4" y2="526.71" stroke="#f0f0f0" stroke-width="1"/><line x1="226.4" y1="559.24" x2="1035.4" y2="559.24" stroke="#f0f0f0" stroke-width="1"/><line x1="226.4" y1="591.77" x2="1035.4" y2="591.77" stroke="#f0f0f0" stroke-width="1"/><line x1="296.75" y1="396.6" x2="296.75" y2="624.3" stroke="#f0f0f0" stroke-width="1"/><line x1="367.10" y1="396.6" x2="367.10" y2="624.3" stroke="#f0f0f0" stroke-width="1"/><line x1="437.44" y1="396.6" x2="437.44" y2="624.3" stroke="#f0f0f0" stroke-width="1"/><line x1="507.79" y1="396.6" x2="507.79" y2="624.3" stroke="#f0f0f0" stroke-width="1"/><line x1="578.14" y1="396.6" x2="578.14" y2="624.3" stroke="#f0f0f0" stroke-width="1"/><line x1="648.49" y1="396.6" x2="648.49" y2="624.3" stroke="#f0f0f0" stroke-width="1"/><line x1="718.83" y1="396.6" x2="718.83" y2="624.3" stroke="#f0f0f0" stroke-width="1"/><line x1="789.18" y1="396.6" x2="789.18" y2="624.3" stroke="#f0f0f0" stroke-width="1"/><line x1="859.53" y1="396.6" x2="859.53" y2="624.3" stroke="#f0f0f0" stroke-width="1"/><line x1="929.88" y1="396.6" x2="929.88" y2="624.3" stroke="#f0f0f0" stroke-width="1"/><line x1="1000.23" y1="396.6" x2="1000.23" y2="624.3" stroke="#f0f0f0" stroke-width="1"/></g>
<line x1="226.4" y1="396.6" x2="226.4" y2="624.3" stroke="#e0e0e0" stroke-width="1.2"/>
<line x1="1035.4" y1="396.6" x2="1035.4" y2="624.3" stroke="#e0e0e0" stroke-width="1.2"/>
<g fill="#5bc0e3"><rect x="229.92" y="615.90" width="28.14" height="8.40"/><rect x="265.09" y="613.90" width="28.14" height="10.40"/><rect x="300.27" y="603.00" width="28.14" height="21.30"/><rect x="335.44" y="610.60" width="28.14" height="13.70"/><rect x="370.61" y="608.70" width="28.14" height="15.60"/><rect x="405.79" y="609.10" width="28.14" height="15.20"/><rect x="440.96" y="596.10" width="28.14" height="28.20"/><rect x="476.13" y="603.00" width="28.14" height="21.30"/><rect x="511.31" y="615.90" width="28.14" height="8.40"/><rect x="546.48" y="607.00" width="28.14" height="17.30"/><rect x="581.66" y="583.00" width="28.14" height="41.30"/><rect x="616.83" y="566.10" width="28.14" height="58.20"/><rect x="652.00" y="472.00" width="28.14" height="152.30"/><rect x="687.18" y="466.30" width="28.14" height="158.00"/><rect x="722.35" y="469.70" width="28.14" height="154.60"/><rect x="757.53" y="469.00" width="28.14" height="155.30"/><rect x="792.70" y="487.10" width="28.14" height="137.20"/><rect x="827.87" y="457.00" width="28.14" height="167.30"/><rect x="863.05" y="471.40" width="28.14" height="152.90"/><rect x="898.22" y="478.30" width="28.14" height="146.00"/><rect x="933.40" y="460.50" width="28.14" height="163.80"/><rect x="968.57" y="487.40" width="28.14" height="136.90"/><rect x="1003.74" y="405.80" width="28.14" height="218.50"/></g>
<line x1="226.4" y1="624.3" x2="1035.4" y2="624.3" stroke="#dddddd" stroke-width="1.4"/>
<path d="M243.99,611.10 C243.99,611.10 261.92,611.10 279.16,608.30 C297.10,604.91 296.59,598.46 314.33,597.80 C331.76,597.16 331.72,604.26 349.51,605.70 C366.90,607.11 367.08,603.78 384.68,603.50 C402.26,603.23 402.65,606.95 419.86,604.60 C437.83,602.15 437.12,595.50 455.03,593.90 C472.30,592.35 473.01,594.36 490.20,598.30 C508.18,602.41 507.44,608.44 525.38,610.00 C542.61,611.10 544.61,611.10 560.55,604.40 C579.79,596.12 576.96,589.81 595.73,579.70 C612.13,570.86 620.95,580.89 630.90,566.50 C656.12,530.04 640.46,512.08 666.07,478.00 C675.63,465.28 683.60,473.48 701.25,472.90 C718.77,472.33 718.82,475.42 736.42,475.70 C753.99,475.97 755.05,470.10 771.60,474.00 C790.22,478.40 790.43,494.83 806.77,492.30 C825.61,489.38 822.71,467.23 841.94,463.10 C857.89,459.68 859.04,471.83 877.12,477.20 C894.21,482.28 895.32,486.10 912.29,484.00 C930.50,481.75 930.88,466.28 947.47,468.50 C966.06,470.98 970.74,502.15 982.64,493.40 C1005.91,476.30 1017.81,416.80 1017.81,416.80" fill="none" stroke="#3f8fc4" stroke-width="1.6"/>
<g fill="#fff" stroke="#3f8fc4" stroke-width="1.4"><circle cx="243.99" cy="611.10" r="2.6"/><circle cx="314.33" cy="597.80" r="2.6"/><circle cx="384.68" cy="603.50" r="2.6"/><circle cx="455.03" cy="593.90" r="2.6"/><circle cx="525.38" cy="610.00" r="2.6"/><circle cx="595.73" cy="579.70" r="2.6"/><circle cx="666.07" cy="478.00" r="2.6"/><circle cx="736.42" cy="475.70" r="2.6"/><circle cx="806.77" cy="492.30" r="2.6"/><circle cx="877.12" cy="477.20" r="2.6"/><circle cx="947.47" cy="468.50" r="2.6"/><circle cx="1017.81" cy="416.80" r="2.6"/></g>
<g font-family="Liberation Sans, sans-serif" font-size="9.5" fill="#333"><text transform="translate(220 399.9) scale(0.947 1)" text-anchor="end">5k</text><text transform="translate(220 432.4) scale(0.947 1)" text-anchor="end">4.5k</text><text transform="translate(220 465.0) scale(0.947 1)" text-anchor="end">4k</text><text transform="translate(220 497.5) scale(0.947 1)" text-anchor="end">3.5k</text><text transform="translate(220 530.0) scale(0.947 1)" text-anchor="end">3k</text><text transform="translate(220 562.5) scale(0.947 1)" text-anchor="end">2.5k</text><text transform="translate(220 595.1) scale(0.947 1)" text-anchor="end">2k</text><text transform="translate(220 627.6) scale(0.947 1)" text-anchor="end">1.5k</text><text transform="translate(1041.2 399.9) scale(0.947 1)">12k</text><text transform="translate(1041.2 428.4) scale(0.947 1)">11k</text><text transform="translate(1041.2 456.8) scale(0.947 1)">10k</text><text transform="translate(1041.2 485.3) scale(0.947 1)">9k</text><text transform="translate(1041.2 513.8) scale(0.947 1)">8k</text><text transform="translate(1041.2 542.2) scale(0.947 1)">7k</text><text transform="translate(1041.2 570.7) scale(0.947 1)">6k</text><text transform="translate(1041.2 599.1) scale(0.947 1)">5k</text><text transform="translate(1041.2 627.6) scale(0.947 1)">4k</text><text transform="translate(244.0 638) scale(0.9 1)" text-anchor="middle">2016-1</text><text transform="translate(314.3 638) scale(0.9 1)" text-anchor="middle">2016-3</text><text transform="translate(384.7 638) scale(0.9 1)" text-anchor="middle">2016-5</text><text transform="translate(455.0 638) scale(0.9 1)" text-anchor="middle">2016-7</text><text transform="translate(525.4 638) scale(0.9 1)" text-anchor="middle">2016-9</text><text transform="translate(595.7 638) scale(0.9 1)" text-anchor="middle">2016-11</text><text transform="translate(666.1 638) scale(0.9 1)" text-anchor="middle">2017-1</text><text transform="translate(736.4 638) scale(0.9 1)" text-anchor="middle">2017-3</text><text transform="translate(806.8 638) scale(0.9 1)" text-anchor="middle">2017-5</text><text transform="translate(877.1 638) scale(0.9 1)" text-anchor="middle">2017-7</text><text transform="translate(947.5 638) scale(0.9 1)" text-anchor="middle">2017-9</text><text transform="translate(1017.8 638) scale(0.9 1)" text-anchor="middle">2017-11</text></g>
</svg><svg class="a" style="left:890px;top:600px" width="160" height="50" viewBox="0 0 160 50">
 <defs>
  <filter id="sh" x="-20%" y="-20%" width="140%" height="140%"><feGaussianBlur in="SourceAlpha" stdDeviation="0.7"/><feOffset dx="0.6" dy="0.8"/><feComponentTransfer><feFuncA type="linear" slope="0.7"/></feComponentTransfer><feMerge><feMergeNode/><feMergeNode in="SourceGraphic"/></feMerge></filter>
 </defs>
 <g filter="url(#sh)">
  <path d="M22 7.3 C14.5 7.3 8.6 12.4 8.6 18.6 C8.6 22.2 10.5 25.3 13.5 27.4 L12.2 31.8 L17.2 29.2 C18.8 29.7 20.4 29.9 22 29.9 C29.5 29.9 35.6 24.8 35.6 18.6 C35.6 12.4 29.5 7.3 22 7.3Z" fill="#eef6fa" stroke="#a9b8c0" stroke-width="0.6"/>
  <circle cx="17.4" cy="14.8" r="1.7" fill="#5a9ec0"/><circle cx="25.5" cy="14.8" r="1.7" fill="#5a9ec0"/>
  <path d="M35 17.5 C28.6 17.5 23.2 21.8 23.2 27.3 C23.2 32.8 28.6 37.2 35 37.2 C36.4 37.2 37.7 37 39 36.6 L43.4 39.6 L42.2 35.2 C45 33.4 46.8 30.5 46.8 27.3 C46.8 21.8 41.4 17.5 35 17.5Z" fill="#fff" stroke="#555" stroke-width="0.7"/>
  <circle cx="31.2" cy="24.6" r="1.4" fill="#888"/><circle cx="38.6" cy="24.6" r="1.4" fill="#888"/>
  <text x="52.5" y="35.6" font-family="Liberation Sans, sans-serif" font-size="25" fill="#fff" stroke="#777" stroke-width="0.4" letter-spacing="2.2">andflow</text>
 </g>
</svg>
</body></html>
